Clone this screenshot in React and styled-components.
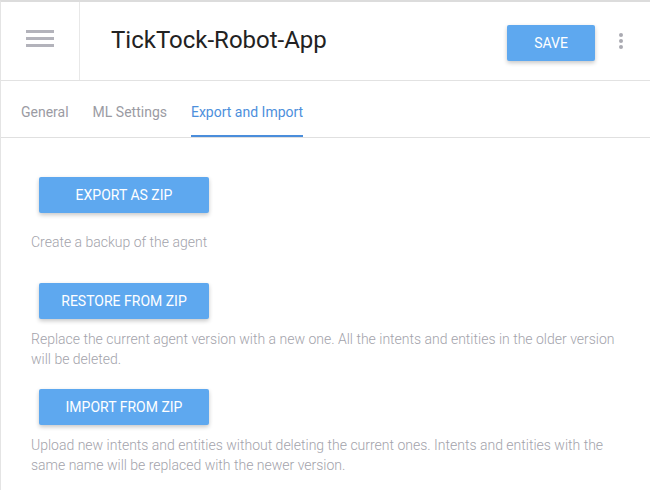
import React from "react";
import styled, { createGlobalStyle } from "styled-components";

const GlobalStyle = createGlobalStyle`
  html, body {
    margin: 0;
    padding: 0;
    background: #fff;
  }
  body {
    font-family: Roboto, "Liberation Sans", sans-serif;
  }
`;

const Page = styled.div`
  width: 650px;
  height: 490px;
  box-sizing: border-box;
  border-top: 2px solid #dcdcdc;
  border-left: 1px solid #e4e4e4;
  overflow: hidden;
`;

const Header = styled.header`
  display: flex;
  align-items: stretch;
  height: 78px;
  border-bottom: 1px solid #e2e2e2;
`;

const MenuCell = styled.div`
  width: 79px;
  border-right: 1px solid #e8e8e8;
  display: flex;
  align-items: center;
  justify-content: center;
  padding-bottom: 6px;
  box-sizing: border-box;
`;

const Burger = styled.div`
  display: flex;
  flex-direction: column;
  gap: 4px;
  span {
    display: block;
    width: 28px;
    height: 3px;
    background: #b3b3bb;
  }
`;

const Title = styled.h1`
  flex: 1;
  margin: 0;
  padding-left: 31px;
  padding-bottom: 2px;
  display: flex;
  align-items: center;
  font-size: 24px;
  font-weight: 400;
  color: #222;
`;

const Actions = styled.div`
  display: flex;
  align-items: center;
  padding-right: 27px;
  padding-top: 4px;
  gap: 24px;
`;

const Button = styled.button`
  height: 36px;
  width: ${(p) => p.$width || 170}px;
  margin-top: ${(p) => p.$top || 0}px;
  margin-left: ${(p) => p.$left || 0}px;
  border: none;
  border-radius: 2px;
  background: #5ea8ef;
  color: #fff;
  font-family: Roboto, "Liberation Sans", sans-serif;
  font-size: 14px;
  font-weight: 400;
  text-transform: uppercase;
  box-shadow: 0 2px 4px rgba(0, 0, 0, 0.22);
  cursor: pointer;
  display: block;
`;

const Kebab = styled.div`
  display: flex;
  flex-direction: column;
  gap: 2px;
  margin-top: -4px;
  span {
    width: 4px;
    height: 4px;
    border-radius: 50%;
    background: #aaaab2;
  }
`;

const Tabs = styled.nav`
  display: flex;
  align-items: stretch;
  height: 56px;
  padding-left: 20px;
  gap: 24px;
  border-bottom: 1px solid #e0e0e0;
`;

const Tab = styled.div`
  display: flex;
  align-items: center;
  padding-top: 8px;
  font-size: 14px;
  color: ${(p) => (p.$active ? "#4d8fdc" : "#9b9ba3")};
  border-bottom: 2px solid ${(p) => (p.$active ? "#4a8ddb" : "transparent")};
  box-sizing: border-box;
`;

const Content = styled.main`
  padding: 39px 30px 0 30px;
`;

const Desc = styled.p`
  margin: ${(p) => p.$top || 0}px 0 0 0;
  font-size: 14px;
  font-weight: 300;
  line-height: 20px;
  color: #a3a3ab;
`;

const items = [
  {
    label: "Export as zip",
    desc: "Create a backup of the agent",
    top: 0,
    gap: 19,
  },
  {
    label: "Restore from zip",
    desc: "Replace the current agent version with a new one. All the intents and entities in the older version will be deleted.",
    top: 31,
    gap: 10,
  },
  {
    label: "Import from zip",
    desc: "Upload new intents and entities without deleting the current ones. Intents and entities with the same name will be replaced with the newer version.",
    top: 20,
    gap: 10,
  },
];

const App = () => {
  return (
    <Page>
      <GlobalStyle />
      <Header>
        <MenuCell>
          <Burger>
            <span />
            <span />
            <span />
          </Burger>
        </MenuCell>
        <Title>TickTock-Robot-App</Title>
        <Actions>
          <Button $width={88}>Save</Button>
          <Kebab>
            <span />
            <span />
            <span />
          </Kebab>
        </Actions>
      </Header>
      <Tabs>
        <Tab>General</Tab>
        <Tab>ML Settings</Tab>
        <Tab $active>Export and Import</Tab>
      </Tabs>
      <Content>
        {items.map((it) => (
          <section key={it.label}>
            <Button $top={it.top} $left={8}>
              {it.label}
            </Button>
            <Desc $top={it.gap}>{it.desc}</Desc>
          </section>
        ))}
      </Content>
    </Page>
  );
};

export default App;
